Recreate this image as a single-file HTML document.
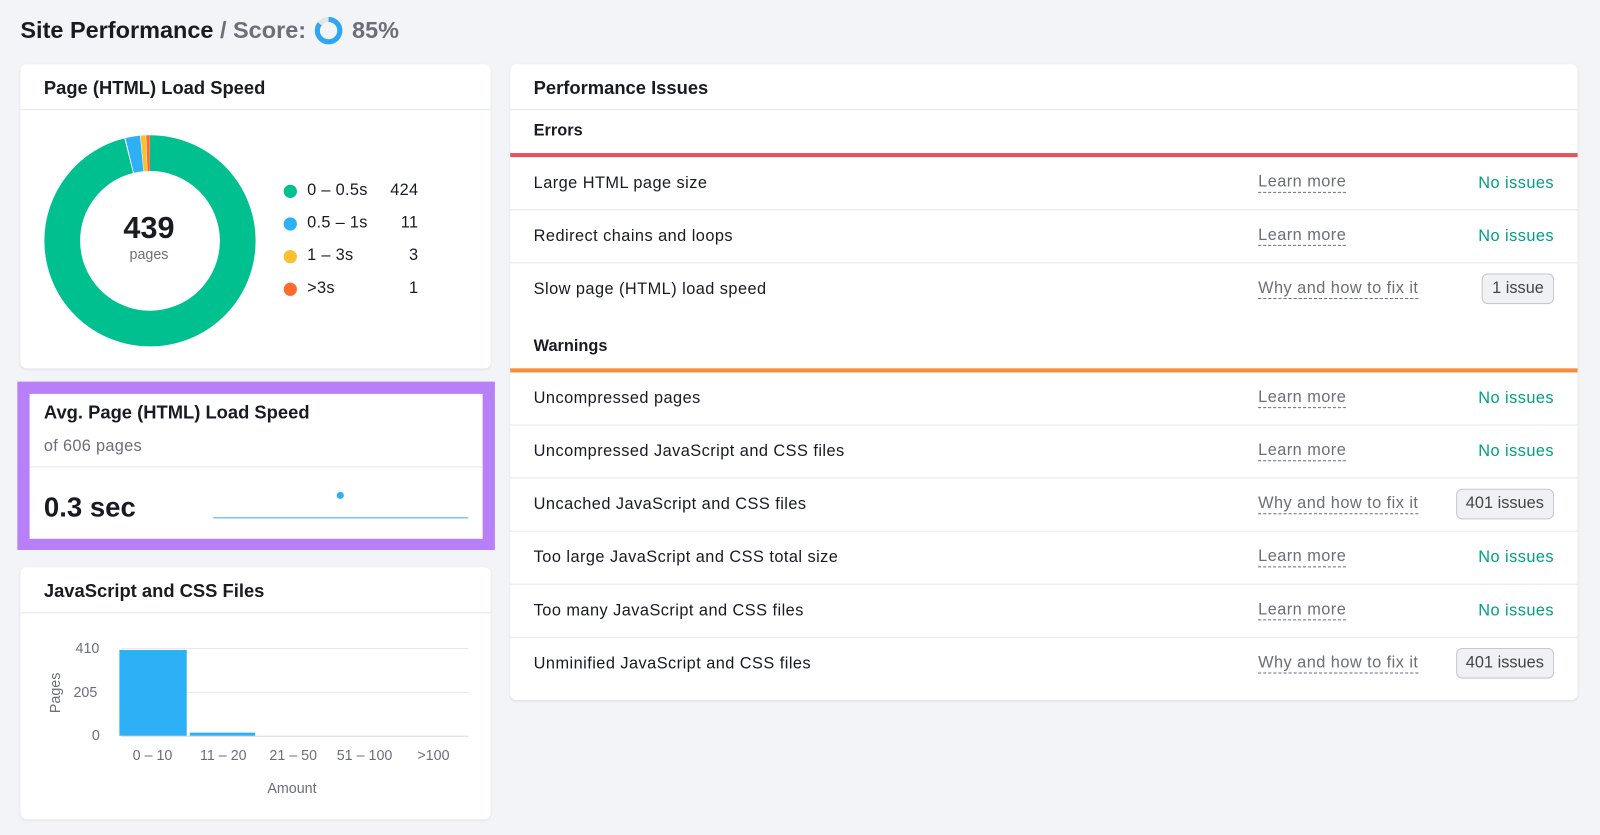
<!DOCTYPE html>
<html><head><meta charset="utf-8"><style>
*{margin:0;padding:0;box-sizing:border-box}
body{width:1600px;height:834px;background:#f3f4f8;font-family:"Liberation Sans",sans-serif;color:#191b23;position:relative;overflow:hidden}
#w{position:absolute;left:0;top:0;width:1568px;height:818px;transform:scale(1.0204);transform-origin:0 0}
.a{position:absolute}
.card{position:absolute;background:#fff;border-radius:6px;box-shadow:0 1px 2px rgba(0,0,0,.08)}
.h{font-weight:bold;font-size:18px}
.line{position:absolute;left:0;right:0;height:1px;background:#e6e7eb}
.row{position:absolute;left:0;right:0;height:52px;border-bottom:1px solid #e6e7eb;font-size:16px;letter-spacing:.45px}
.row .t{position:absolute;left:23px;top:17px}
.row .l{position:absolute;left:733px;top:16px;color:#6c6e79;border-bottom:1px dashed #6c6e79;line-height:18px}
.row .n{position:absolute;right:23px;top:17px;color:#009f81}
.row .b{position:absolute;right:23px;top:10px;border:1px solid #c4c7cf;background:#f0f1f4;border-radius:6px;padding:5px 9px;color:#444;letter-spacing:0}
.lg{position:absolute;left:258px;font-size:16px;letter-spacing:.3px}
.lg i{position:absolute;left:0;top:3px;width:13px;height:13px;border-radius:50%}
.lg span{position:absolute;left:23px;white-space:nowrap}
.lg b{position:absolute;font-weight:normal;left:72px;text-align:right;width:60px}
</style></head><body><div id="w">
<div class="a" style="left:20px;top:16px;font-size:23px;font-weight:bold;white-space:nowrap">Site Performance <span style="color:#6c6e79">/ Score:</span></div>
<svg class="a" style="left:308px;top:16px" width="28" height="28"><circle cx="14" cy="14" r="11" fill="none" stroke="#e3e4e8" stroke-width="5"/><circle cx="14" cy="14" r="11" fill="none" stroke="#2ea7f2" stroke-width="5" stroke-dasharray="58.7 69.1" transform="rotate(-90 14 14)"/></svg>
<div class="a" style="left:345px;top:16px;font-size:23px;font-weight:bold;color:#6c6e79">85%</div>

<div class="card" style="left:20px;top:63px;width:461px;height:298px">
<div class="a h" style="left:23px;top:13px">Page (HTML) Load Speed</div>
<div class="line" style="top:44px"></div>
<svg class="a" style="left:22px;top:68px" width="210" height="210">
<g transform="rotate(-90 105 105)" fill="none" stroke-width="35">
<circle cx="105" cy="105" r="86" stroke="#00c08f" stroke-dasharray="519 540.4"/>
<circle cx="105" cy="105" r="86" stroke="#2eb0f7" stroke-dasharray="0 520 12 540.4"/>
<circle cx="105" cy="105" r="86" stroke="#fbc02d" stroke-dasharray="0 532.5 4 540.4"/>
<circle cx="105" cy="105" r="86" stroke="#ff6b2c" stroke-dasharray="0 537 3 540.4"/>
</g></svg>
<div class="a" style="left:76px;top:144px;width:100px;text-align:center;font-size:30px;font-weight:bold">439</div>
<div class="a" style="left:76px;top:178px;width:100px;text-align:center;font-size:14px;color:#6c6e79">pages</div>
<div class="lg" style="top:115px"><i style="background:#00c08f"></i><span>0 – 0.5s</span><b>424</b></div>
<div class="lg" style="top:147px"><i style="background:#2eb0f7"></i><span>0.5 – 1s</span><b>11</b></div>
<div class="lg" style="top:179px"><i style="background:#fbc02d"></i><span>1 – 3s</span><b>3</b></div>
<div class="lg" style="top:211px"><i style="background:#ff6b2c"></i><span>&gt;3s</span><b>1</b></div>
</div>

<div class="a" style="left:17px;top:374px;width:468px;height:165px;background:#b77ff8"></div>
<div class="a" style="left:29px;top:386px;width:444px;height:142px;background:#fff">
<div class="a h" style="left:14px;top:8px">Avg. Page (HTML) Load Speed</div>
<div class="a" style="left:14px;top:43px;font-size:16px;color:#6c6e79;letter-spacing:.3px">of 606 pages</div>
<div class="line" style="top:71px"></div>
<div class="a" style="left:14px;top:96px;font-size:27px;font-weight:bold">0.3 sec</div>
<div class="a" style="left:180px;top:121px;width:250px;height:1px;background:#2eb0f7"></div>
<div class="a" style="left:301px;top:96px;width:7px;height:7px;border-radius:50%;background:#2eb0f7"></div>
</div>

<div class="card" style="left:20px;top:556px;width:461px;height:247px">
<div class="a h" style="left:23px;top:13px">JavaScript and CSS Files</div>
<div class="line" style="top:44px"></div>
<div class="a" style="left:99px;top:79px;width:340px;height:1px;background:#e6e7eb"></div>
<div class="a" style="left:99px;top:122px;width:340px;height:1px;background:#e6e7eb"></div>
<div class="a" style="left:99px;top:165px;width:340px;height:1px;background:#d6d8dd"></div>
<div class="a" style="left:54px;top:71px;font-size:14px;color:#6c6e79">410</div>
<div class="a" style="left:52px;top:114px;font-size:14px;color:#6c6e79">205</div>
<div class="a" style="left:70px;top:156px;font-size:14px;color:#6c6e79">0</div>
<div class="a" style="left:14px;top:115px;font-size:14px;color:#6c6e79;transform:rotate(-90deg)">Pages</div>
<div class="a" style="left:97px;top:81px;width:66px;height:84px;background:#2eb0f7"></div>
<div class="a" style="left:166px;top:162px;width:64px;height:3px;background:#2eb0f7"></div>
<div class="a" style="left:110px;top:176px;font-size:14px;color:#6c6e79">0 – 10</div>
<div class="a" style="left:176px;top:176px;font-size:14px;color:#6c6e79">11 – 20</div>
<div class="a" style="left:244px;top:176px;font-size:14px;color:#6c6e79">21 – 50</div>
<div class="a" style="left:310px;top:176px;font-size:14px;color:#6c6e79">51 – 100</div>
<div class="a" style="left:389px;top:176px;font-size:14px;color:#6c6e79">&gt;100</div>
<div class="a" style="left:242px;top:208px;font-size:14px;color:#6c6e79">Amount</div>
</div>

<div class="card" style="left:500px;top:63px;width:1046px;height:623px">
<div class="a h" style="left:23px;top:13px">Performance Issues</div>
<div class="line" style="top:44px"></div>
<div class="a" style="left:23px;top:57px;font-size:16px;font-weight:bold">Errors</div>
<div class="a" style="left:0;right:0;top:87px;height:4px;background:#e8505b"></div>
<div class="row" style="top:91px"><div class="t">Large HTML page size</div><div class="l">Learn more</div><div class="n">No issues</div></div>
<div class="row" style="top:143px"><div class="t">Redirect chains and loops</div><div class="l">Learn more</div><div class="n">No issues</div></div>
<div class="row" style="top:195px;border:none"><div class="t">Slow page (HTML) load speed</div><div class="l">Why and how to fix it</div><div class="b">1 issue</div></div>
<div class="a" style="left:23px;top:268px;font-size:16px;font-weight:bold">Warnings</div>
<div class="a" style="left:0;right:0;top:298px;height:4px;background:#f88a3b"></div>
<div class="row" style="top:302px"><div class="t">Uncompressed pages</div><div class="l">Learn more</div><div class="n">No issues</div></div>
<div class="row" style="top:354px"><div class="t">Uncompressed JavaScript and CSS files</div><div class="l">Learn more</div><div class="n">No issues</div></div>
<div class="row" style="top:406px"><div class="t">Uncached JavaScript and CSS files</div><div class="l">Why and how to fix it</div><div class="b">401 issues</div></div>
<div class="row" style="top:458px"><div class="t">Too large JavaScript and CSS total size</div><div class="l">Learn more</div><div class="n">No issues</div></div>
<div class="row" style="top:510px"><div class="t">Too many JavaScript and CSS files</div><div class="l">Learn more</div><div class="n">No issues</div></div>
<div class="row" style="top:562px;border:none"><div class="t">Unminified JavaScript and CSS files</div><div class="l">Why and how to fix it</div><div class="b">401 issues</div></div>
</div>
</div></body></html>
